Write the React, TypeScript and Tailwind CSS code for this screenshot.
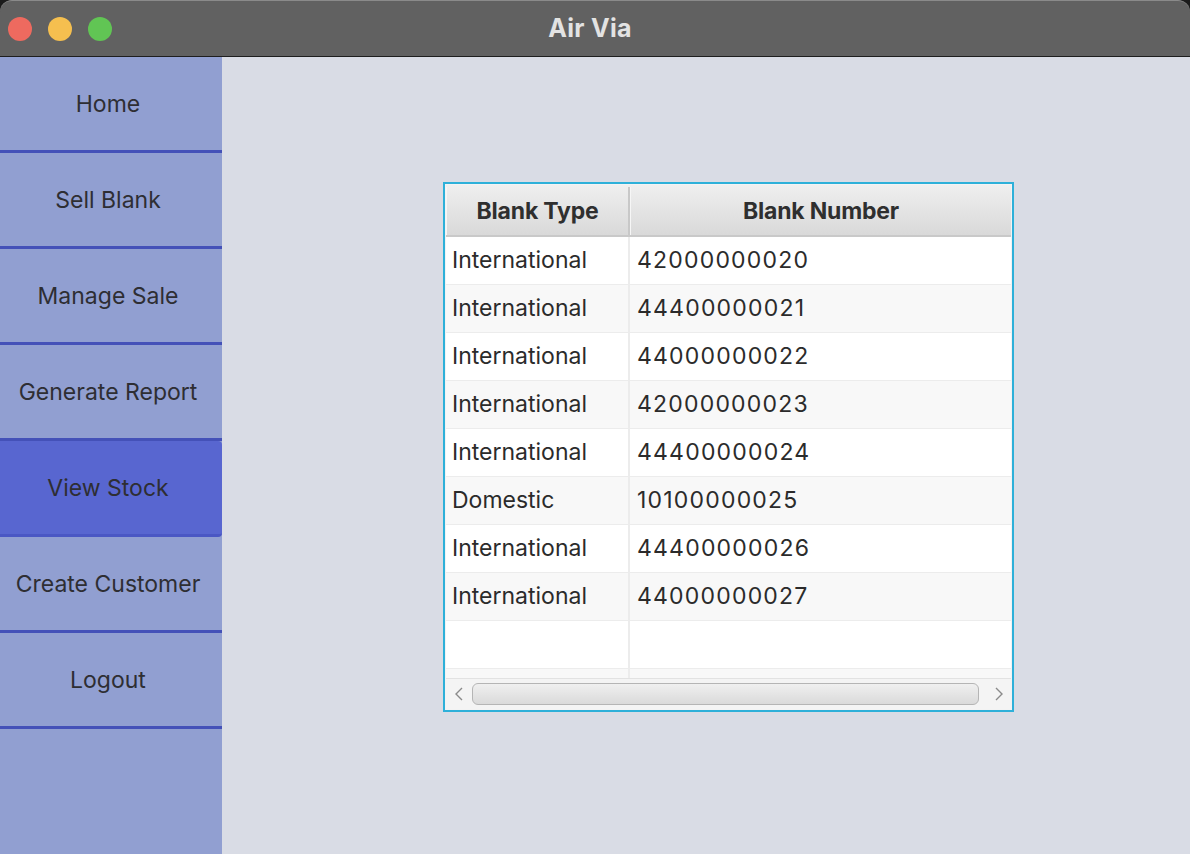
import React from "react";

const rows: [string, string][] = [
  ["International", "42000000020"],
  ["International", "44400000021"],
  ["International", "44000000022"],
  ["International", "42000000023"],
  ["International", "44400000024"],
  ["Domestic", "10100000025"],
  ["International", "44400000026"],
  ["International", "44000000027"],
  ["", ""],
];

const nav = ["Home", "Sell Blank", "Manage Sale", "Generate Report", "View Stock", "Create Customer", "Logout"];

export default function App() {
  return (
    <div
      className="w-[1190px] h-[854px] flex flex-col overflow-hidden bg-[#1b1b1b]"
      style={{ fontFamily: "Inter, 'Noto Sans', sans-serif" }}
    >
      <div className="h-[57px] shrink-0 bg-[#616161] rounded-t-[12px] border-t border-[#8a8a8a] border-b border-b-[#1e1e1e] flex items-center relative">
        <div className="flex items-center gap-[16px] pl-[8px]">
          <div className="w-[24px] h-[24px] rounded-full bg-[#ee6a5f]" />
          <div className="w-[24px] h-[24px] rounded-full bg-[#f5bf4f]" />
          <div className="w-[24px] h-[24px] rounded-full bg-[#61c554]" />
        </div>
        <div className="absolute inset-0 flex items-center justify-center pr-[10px] text-[25px] font-bold text-[#e3e3e3] tracking-[0.3px]">
          Air Via
        </div>
      </div>
      <div className="flex flex-1 min-h-0">
        <div className="w-[222px] shrink-0 bg-[#919fd1] flex flex-col">
          {nav.map((n) => {
            const active = n === "View Stock";
            return (
              <div
                key={n}
                className={
                  "h-[96px] shrink-0 flex items-center justify-center pr-[6px] pt-[1px] border-b-[3px] border-[#4451b8] text-[23px] text-[#2e2e33] " +
                  (active ? "bg-[#5866d0] rounded-r-[4px] border-b-[#4a57c4]" : "")
                }
              >
                <span>{n}</span>
              </div>
            );
          })}
        </div>
        <div className="flex-1 bg-[#d9dce5]">
          <div className="ml-[221px] mt-[125px] w-[571px] h-[530px] border-2 border-[#2eb0d9] bg-[#f3f3f3] p-[1px] flex flex-col">
            <div className="flex h-[52px] shrink-0 pt-[2px] border-b-2 border-[#c9c9c9] bg-gradient-to-b from-[#efefef] to-[#d9d9d9] text-[23px] font-bold text-[#2f2f2f] tracking-[-0.2px]">
              <div className="w-[184px] flex items-center justify-center border-r-2 border-r-[#c8c8c8] border-l border-l-[#f6f6f6]">
                Blank Type
              </div>
              <div className="flex-1 flex items-center justify-center border-l border-l-[#f6f6f6]">Blank Number</div>
            </div>
            <div className="flex-1 min-h-0 overflow-hidden flex flex-col">
              {rows.map((r, i) => (
                <div
                  key={i}
                  className={
                    "flex h-[48px] shrink-0 border-b border-[#ececec] text-[23px] text-[#2b2b2b] " +
                    (i % 2 === 0 ? "bg-white" : "bg-[#f8f8f8]")
                  }
                >
                  <div className="w-[184px] flex items-center pl-[6px] border-r-2 border-[#ececec]">{r[0]}</div>
                  <div className="flex-1 flex items-center pl-[7px] tracking-[1.2px]">{r[1]}</div>
                </div>
              ))}
              <div className="flex h-[10px] shrink-0 bg-[#f8f8f8]">
                <div className="w-[184px] border-r-2 border-[#ececec]" />
              </div>
            </div>
            <div className="h-[31px] shrink-0 bg-[#f4f4f4] border-t border-[#e2e2e2] flex items-center px-[4px]">
              <svg width="16" height="18" viewBox="0 0 16 18" className="shrink-0 ml-[1px]">
                <path d="M11 3 L5 9 L11 15" stroke="#8a8a8a" strokeWidth="1.4" fill="none" />
              </svg>
              <div className="flex-1 ml-[5px] mr-[12px] h-[22px] rounded-[6px] border border-[#b5b5b5] bg-gradient-to-b from-[#f0f0f0] to-[#dadada]" />
              <svg width="16" height="18" viewBox="0 0 16 18" className="shrink-0 mr-[0px]">
                <path d="M5 3 L11 9 L5 15" stroke="#8a8a8a" strokeWidth="1.4" fill="none" />
              </svg>
            </div>
          </div>
        </div>
      </div>
    </div>
  );
}
